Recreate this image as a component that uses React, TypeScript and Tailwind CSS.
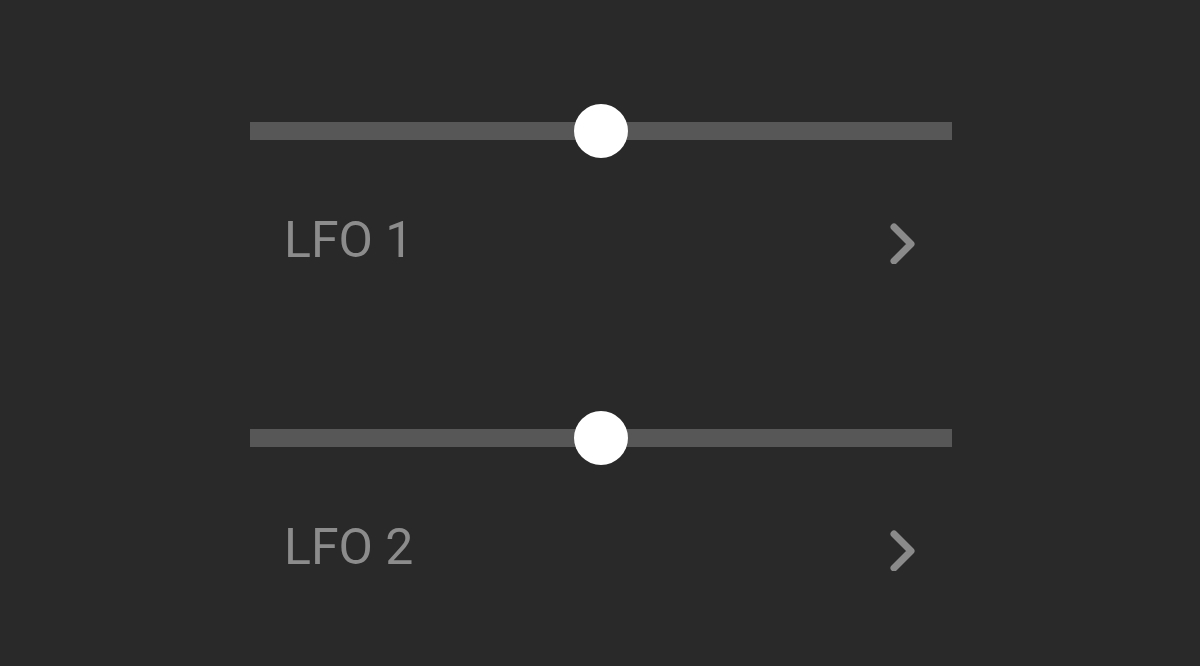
import React from "react";

function Chevron() {
  return (
    <svg width="40" height="48" viewBox="0 0 40 48" className="block">
      <path d="M11 11 L28 28 L11 45" fill="none" stroke="#8a8a8a" strokeWidth="7" strokeLinecap="round" strokeLinejoin="round" />
    </svg>
  );
}

function Item({ label, value }: { label: string; value: number }) {
  return (
    <div className="flex flex-col">
      <div className="relative h-[54px] flex items-center">
        <div className="h-[18px] w-full bg-[#575757]" />
        <div
          className="absolute top-0 h-[54px] w-[54px] -ml-[27px] rounded-full bg-white"
          style={{ left: `${value * 100}%` }}
        />
      </div>
      <div className="flex h-[164px] items-center justify-between pl-[34px] pr-[29px]">
        <span className="text-[50px] leading-none text-[#8c8c8c]" style={{ fontFamily: "Roboto, sans-serif" }}>
          {label}
        </span>
        <Chevron />
      </div>
    </div>
  );
}

export default function App() {
  return (
    <div className="h-[666px] w-[1200px] bg-[#292929] overflow-hidden">
      <div className="ml-[250px] w-[702px] pt-[104px] flex flex-col gap-[89px]">
        <Item label="LFO 1" value={0.5} />
        <Item label="LFO 2" value={0.5} />
      </div>
    </div>
  );
}
